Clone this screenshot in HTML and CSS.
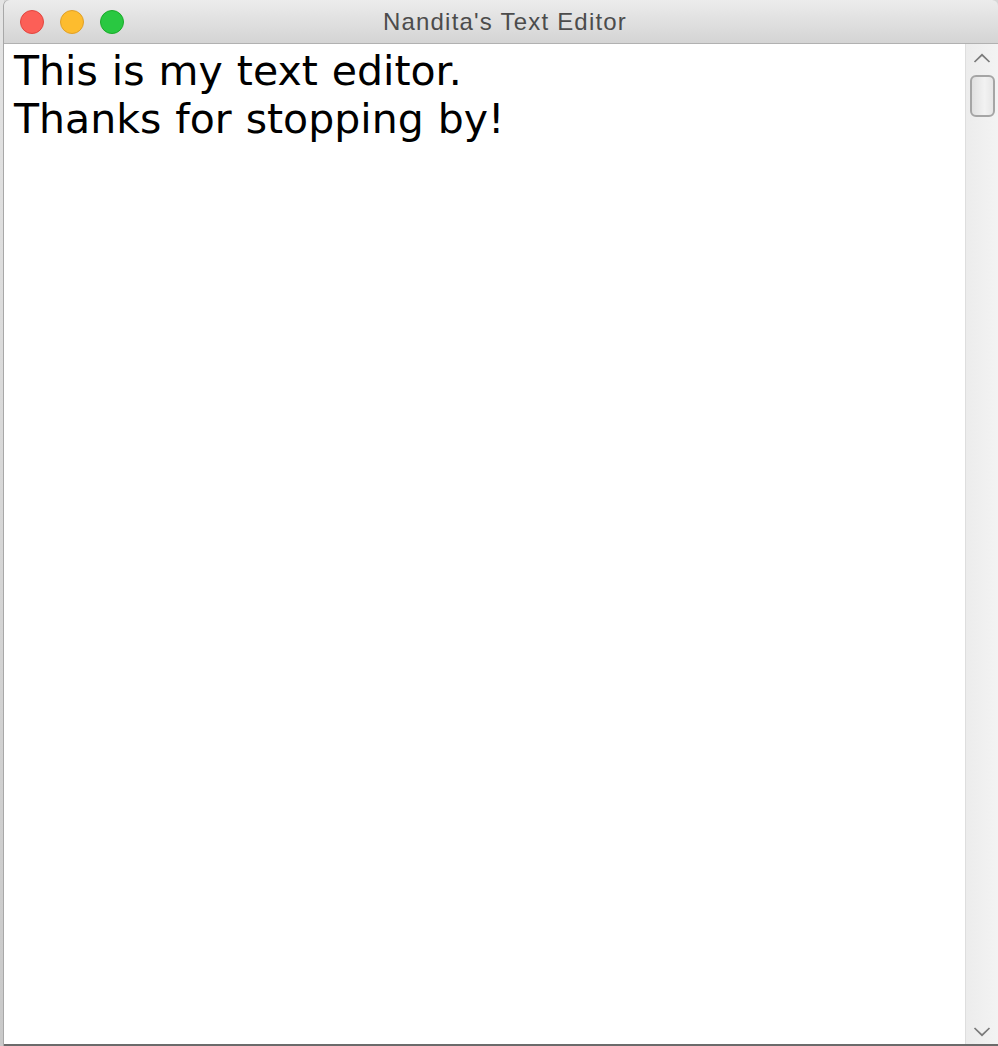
FILE: index.html
```html
<!DOCTYPE html>
<html lang="en">
<head>
<meta charset="utf-8">
<title>Nandita's Text Editor</title>
<link rel="stylesheet" href="styles.css">
</head>
<body>
<div class="desktop">
  <div class="desk-strip"></div>
  <div class="window">
    <div class="titlebar">
      <div class="lights">
        <span class="light red"></span>
        <span class="light yellow"></span>
        <span class="light green"></span>
      </div>
      <div class="title">Nandita's Text Editor</div>
    </div>
    <div class="body">
      <div class="editor">
        <div class="line">This is my text editor.</div>
        <div class="line">Thanks for stopping by!</div>
      </div>
      <div class="scrollbar">
        <svg class="arrow" width="18" height="10" viewBox="0 0 18 10"><path d="M1.5 9 L9 1.8 L16.5 9" fill="none" stroke="#7a7a7a" stroke-width="1.7"/></svg>
        <div class="thumb"></div>
        <div class="track"></div>
        <svg class="arrow" width="18" height="10" viewBox="0 0 18 10"><path d="M1.5 1 L9 8.2 L16.5 1" fill="none" stroke="#7a7a7a" stroke-width="1.7"/></svg>
      </div>
    </div>
  </div>
</div>
</body>
</html>
```
FILE: styles.css
```css
html, body {
  margin: 0;
  padding: 0;
  height: 100%;
}
body {
  background: #d6d6d6;
  overflow: hidden;
}
.desktop {
  display: flex;
  height: 1046px;
  width: 998px;
}
.desk-strip {
  width: 4px;
  flex: none;
  background: linear-gradient(#e4e4e4, #c9c9c9);
}
.window {
  flex: 1;
  display: flex;
  flex-direction: column;
  height: 1044px;
  border-radius: 6px 6px 0 0;
  overflow: hidden;
  border-bottom: 2px solid #6b6b6b;
  box-shadow: -1px 0 0 #a8a8a8;
}
.titlebar {
  height: 43px;
  flex: none;
  background: linear-gradient(#ececec, #d4d4d4);
  border-bottom: 1px solid #b1b1b1;
  position: relative;
  display: flex;
  align-items: center;
  justify-content: center;
}
.lights {
  position: absolute;
  left: 16px;
  top: 10px;
  display: flex;
  gap: 16px;
}
.light {
  width: 24px;
  height: 24px;
  border-radius: 50%;
  box-sizing: border-box;
}
.red { background: #fc5f57; border: 1px solid #e2463f; }
.yellow { background: #fdbc2e; border: 1px solid #e0a028; }
.green { background: #29c841; border: 1px solid #1aab29; }
.title {
  font-family: "Liberation Sans", Arial, sans-serif;
  font-size: 24px;
  letter-spacing: 1.2px;
  color: #4c4c4c;
  margin-left: 8px;
  margin-top: 1px;
}
.body {
  flex: 1;
  display: flex;
  background: #fff;
  min-height: 0;
}
.editor {
  flex: 1;
  padding: 3px 0 0 10px;
  font-family: "DejaVu Sans", Verdana, sans-serif;
  font-size: 41px;
  word-spacing: 1px;
  line-height: 48px;
  color: #000;
}
.scrollbar {
  width: 32px;
  flex: none;
  background: linear-gradient(90deg, #ececec, #f3f3f3);
  border-left: 1px solid #dedede;
  display: flex;
  flex-direction: column;
  align-items: center;
}
.arrow {
  flex: none;
  margin-top: 9px;
}
.arrow:last-child {
  margin-top: 0;
  margin-bottom: 7px;
}
.thumb {
  margin-top: 12px;
  width: 25px;
  height: 42px;
  box-sizing: border-box;
  border: 2px solid #a5a5a5;
  border-radius: 6px;
  background: linear-gradient(90deg, #e0e0e0, #f2f2f2 60%, #e6e6e6);
}
.track {
  flex: 1;
}
```
